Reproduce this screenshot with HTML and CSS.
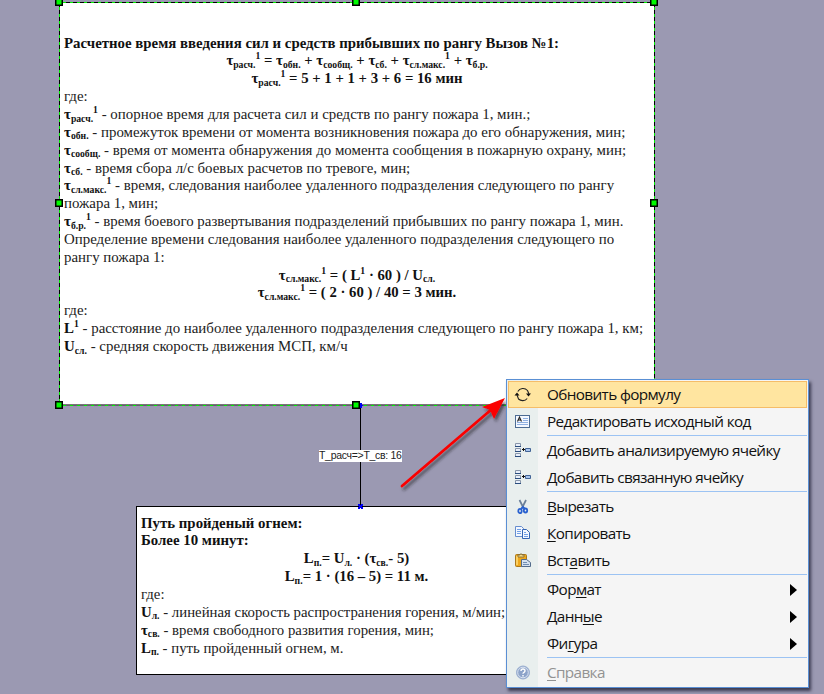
FILE: index.html
```html
<!DOCTYPE html>
<html lang="ru">
<head>
<meta charset="utf-8">
<title>Схема</title>
<link rel="stylesheet" href="styles.css">
</head>
<body>
<main class="canvas">
  <section class="sheet sheet-main">
    <p class="b t1">Расчетное время введения сил и средств прибывших по рангу Вызов №1:</p>
    <p class="b c t2">τ<sub>расч.</sub><sup>1</sup> = τ<sub>обн.</sub> + τ<sub>сообщ.</sub> + τ<sub>сб.</sub> + τ<sub>сл.макс.</sub><sup>1</sup> + τ<sub>б.р.</sub></p>
    <p class="b c t3">τ<sub>расч.</sub><sup>1</sup> = 5 + 1 + 1 + 3 + 6 = 16 мин</p>
    <p>где:</p>
    <p><b>τ<sub>расч.</sub><sup>1</sup></b> - опорное время для расчета сил и средств по рангу пожара 1, мин.;</p>
    <p><b>τ<sub>обн.</sub></b> - промежуток времени от момента возникновения пожара до его обнаружения, мин;</p>
    <p><b>τ<sub>сообщ.</sub></b> - время от момента обнаружения до момента сообщения в пожарную охрану, мин;</p>
    <p><b>τ<sub>сб.</sub></b> - время сбора л/с боевых расчетов по тревоге, мин;</p>
    <p><b>τ<sub>сл.макс.</sub><sup>1</sup></b> - время, следования наиболее удаленного подразделения следующего по рангу</p>
    <p>пожара 1, мин;</p>
    <p><b>τ<sub>б.р.</sub><sup>1</sup></b> - время боевого развертывания подразделений прибывших по рангу пожара 1, мин.</p>
    <p>Определение времени следования наиболее удаленного подразделения следующего по</p>
    <p>рангу пожара 1:</p>
    <p class="b c">τ<sub>сл.макс.</sub><sup>1</sup> = ( L<sup>1</sup> · 60 ) / U<sub>сл.</sub></p>
    <p class="b c">τ<sub>сл.макс.</sub><sup>1</sup> = ( 2 · 60 ) / 40 = 3 мин.</p>
    <p>где:</p>
    <p><b>L<sup>1</sup></b> - расстояние до наиболее удаленного подразделения следующего по рангу пожара 1, км;</p>
    <p><b>U<sub>сл.</sub></b> - средняя скорость движения МСП, км/ч</p>
  </section>

  <section class="sheet sheet-fire">
    <p class="b">Путь пройденый огнем:</p>
    <p class="b">Более 10 минут:</p>
    <p class="b c">L<sub>п.</sub>= U<sub>л.</sub> · (τ<sub>св.</sub>- 5)</p>
    <p class="b c">L<sub>п.</sub>= 1 · (16 – 5) = 11 м.</p>
    <p>где:</p>
    <p><b>U<sub>л.</sub></b> - линейная скорость распространения горения, м/мин;</p>
    <p><b>τ<sub>св.</sub></b> - время свободного развития горения, мин;</p>
    <p><b>L<sub>п.</sub></b> - путь пройденный огнем, м.</p>
  </section>

  <svg class="overlay" width="824" height="694" viewBox="0 0 824 694">
    <defs>
      <filter id="soft" x="-20%" y="-20%" width="150%" height="150%"><feDropShadow dx="2" dy="3" stdDeviation="1.8" flood-color="#222" flood-opacity=".6"/></filter>
    </defs>
    <g fill="none">
      <path d="M59.5 2.500H654.500V405.500H59.500Z" stroke="#00f000"/>
      <path d="M59 2.500H654.500M654.500 3V405M59.500 3V405" stroke="#000" stroke-dasharray="4 3"/>
      <path d="M59 405.500H654.500" stroke="#665c70" stroke-dasharray="4 3"/>
      <path d="M60 404.500H654" stroke="#777"/>
      <path d="M360.500 406V506" stroke="#000"/>
    </g>
    <g fill="#0000f5">
      <path d="M360 403h2v2h1v1h-1v2h-2z"/>
      <path d="M358 504h2v1h1v-1h2v2h-1v1h1v2h-2v-1h-1v1h-2v-2h1v-1h-1z"/>
    </g>
    <g fill="#00fa00" stroke="#000" stroke-width="1.500">
      <rect x="55.750" y="-1.250" width="6.500" height="6.500"/><rect x="352.750" y="-1.250" width="6.500" height="6.500"/><rect x="650.750" y="-1.250" width="6.500" height="6.500"/>
      <rect x="55.750" y="199.750" width="6.500" height="6.500"/><rect x="650.750" y="199.750" width="6.500" height="6.500"/>
      <rect x="55.750" y="401.750" width="6.500" height="6.500"/><rect x="352.750" y="401.750" width="6.500" height="6.500"/>
    </g>
    <g filter="url(#soft)">
      <path d="M402 486L492 409" stroke="#fa0505" stroke-width="2.800" stroke-linecap="round"/>
      <path d="M505 398L482 407L490 410L494 419Z" fill="#fa0505"/>
    </g>
  </svg>
  <div class="link-label">T_расч=&gt;T_св: 16</div>

  <nav class="menu">
    <div class="item active"><span class="icon"><svg width="18" height="18" viewBox="0 0 18 18"><path d="M3.800 5.500A6 6 0 0 1 13.500 4.500L15 8M13.200 12.500A6 6 0 0 1 4.500 13L3 9" fill="none" stroke="#222" stroke-width="1.100"/><path d="M12 7.500h5L14.500 10.500zM.5 9.500h5L3 6.500z" fill="#111"/></svg></span><span>Обновить формулу</span></div>
    <div class="item"><span class="icon"><svg width="18" height="18" viewBox="0 0 18 18"><rect x="1.500" y="2.500" width="14" height="12" fill="#f4f8ff" stroke="#4d6c94"/><path d="M9 5.500h5M9 7.500h5M3 9.500h11M3 11.500h11" stroke="#8fb0e2"/><path d="M3.500 8.500L5.500 4l2 4.500M4.300 7h2.500" fill="none" stroke="#222" stroke-width="1.100"/></svg></span><span>Редактировать исходный код</span></div>
    <hr>
    <div class="item"><span class="icon"><svg width="18" height="18" viewBox="0 0 18 18"><g fill="#e8effa" stroke="#8996ab"><path d="M1.500 1.500h5v3h-5zM1.500 6.500h5v3h-5zM1.500 11.500h5v3h-5z"/><path d="M11.500 6.500h5v3h-5z" fill="#a9c5ec" stroke="#426395"/></g><path d="M1 4.500h6M1 9.500h6M1 14.500h6" stroke="#294c7e"/><path d="M8 7.500h3M9.500 6v3" stroke="#111"/></svg></span><span>Добавить анализируемую ячейку</span></div>
    <div class="item"><span class="icon"><svg width="18" height="18" viewBox="0 0 18 18"><g fill="#e8effa" stroke="#8996ab"><path d="M1.500 1.500h5v3h-5zM1.500 6.500h5v3h-5zM1.500 11.500h5v3h-5z"/><path d="M11.500 6.500h5v3h-5z" fill="#a9c5ec" stroke="#426395"/></g><path d="M1 4.500h6M1 9.500h6M1 14.500h6" stroke="#294c7e"/><path d="M8 7.500h3M9.500 6v3" stroke="#111"/></svg></span><span>Добавить связанную ячейку</span></div>
    <hr>
    <div class="item"><span class="icon"><svg width="18" height="18" viewBox="0 0 18 18"><path d="M5.500 2l4 8M12 2l-4 8" stroke="#6b7f99" stroke-width="1.700"/><g fill="none" stroke="#2860cf" stroke-width="1.800"><ellipse cx="6" cy="13" rx="1.700" ry="2.200"/><ellipse cx="11.500" cy="12.500" rx="1.700" ry="2"/><path d="M7 11l2-2 2 2"/></g></svg></span><span><u>В</u>ырезать</span></div>
    <div class="item"><span class="icon"><svg width="18" height="18" viewBox="0 0 18 18"><g fill="#f3f8ff" stroke="#668dce"><path d="M1.500 1.500h6l2 2v8h-8z"/><path d="M8.500 4.500h4l3 3v6h-7z" stroke="#3666b4"/></g><path d="M3 4.500h4M3 6.500h4M3 8.500h4M10 7.500h2M10 9.500h4M10 11.500h4" stroke="#72a0e5"/></svg></span><span><u>К</u>опировать</span></div>
    <div class="item"><span class="icon"><svg width="18" height="18" viewBox="0 0 18 18"><rect x="1.500" y="2.500" width="11" height="12" rx="1" fill="#eda71c" stroke="#a9781c"/><path d="M3 4v9" stroke="#ffdd77" stroke-width="1.500"/><path d="M4 5V3h2q1-3 2 0h2v2z" fill="#f7dc84" stroke="#78683f" stroke-width=".8"/><path d="M7.500 7.500h5l4 3v4h-9z" fill="#d5e1ef" stroke="#536b8b"/><path d="M9 10.500h4M9 12.500h6" stroke="#718eb2"/></svg></span><span>Вст<u>а</u>вить</span></div>
    <hr>
    <div class="item"><span class="icon"></span><span>Фор<u>м</u>ат</span><i class="more"></i></div>
    <div class="item"><span class="icon"></span><span>Данн<u>ы</u>е</span><i class="more"></i></div>
    <div class="item"><span class="icon"></span><span>Фи<u>г</u>ура</span><i class="more"></i></div>
    <hr>
    <div class="item disabled"><span class="icon"><svg width="18" height="18" viewBox="0 0 18 18"><circle cx="9" cy="8.500" r="6.500" fill="#8ca3c9" stroke="#9aaed0"/><circle cx="9" cy="8.500" r="5.300" fill="none" stroke="#e3eaf5" stroke-width=".9"/><path d="M7 7q0-2 2-2t2 1.800q0 1-1 1.600t-1 1.300M9 11v1.500" fill="none" stroke="#fff" stroke-width="1.400"/></svg></span><span><u>С</u>правка</span></div>
  </nav>
</main>
</body>
</html>
```
FILE: styles.css
```css
* { box-sizing: border-box; }
body { margin: 0; }
.canvas { position: relative; width: 824px; height: 694px; overflow: hidden; background: #9b99b2; }
.sheet { position: absolute; background: #fff; font: 14.900px/17.850px "Liberation Serif", serif; color: #222; }
.sheet p { margin: 0; height: 17.850px; white-space: nowrap; }
.sheet-main { left: 59px; top: 2px; width: 596px; height: 403px; padding: 32.600px 5px 0; }
.sheet-fire { left: 136px; top: 506px; width: 441px; height: 169px; padding: 7.600px 4px 0; border: 1px solid #000; }
.sheet-fire p:nth-child(n+5) { font-size: 14.800px; }
.b, .sheet b { font-weight: bold; color: #111; }
.b { font-size: 14.850px; }
.c { text-align: center; }
.sheet .c { font-size: 14.750px; }
sub, sup { font-size: 9.700px; line-height: 0; vertical-align: baseline; position: relative; }
sub { top: 2.600px; }
sup { top: -6px; }
.overlay { position: absolute; left: 0; top: 0; }
.link-label { position: absolute; left: 319px; top: 450px; width: 83px; height: 12px; background: #fff; font: 10.500px/11px "Liberation Sans", sans-serif; letter-spacing: -.3px; color: #222; white-space: nowrap; }
.menu { position: absolute; left: 506px; top: 379px; width: 303px; height: 309px; padding: 1px; border: 1px solid #5a8fd4; background: linear-gradient(90deg, #e9efee 31px, #f5f5f5 31px); box-shadow: 2px 3px 3px rgba(30, 30, 50, .75); font: 15.300px/27px "Open Sans", "Noto Sans", sans-serif; letter-spacing: -.63px; color: #111; }
.item { display: flex; align-items: center; height: 27px; white-space: nowrap; padding-right: 10px; }
.icon { display: flex; width: 18px; margin: 0 15px 0 6px; }
.active { background: #ffe5a0; box-shadow: inset 0 0 0 1px #f5bd68; }
.disabled { color: #929292; }
.menu hr { height: 1px; margin: 0 0 1px 39px; border: 0; background: #9cc3f3; }
.menu u { text-underline-offset: 2px; text-decoration-thickness: 1px; text-decoration-skip-ink: none; }
.more { margin-left: auto; border: solid transparent; border-width: 6.500px 0 6.500px 7px; border-left-color: #000; }
```
